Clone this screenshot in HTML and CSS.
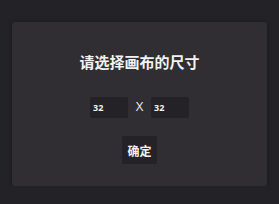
FILE: index.html
```html
<!DOCTYPE html>
<html lang="zh">
<head>
  <meta charset="UTF-8">
  <title>canvas size</title>
  <link rel="stylesheet" href="styles.css">
</head>
<body>
  <div class="dialog">
    <h2 class="title">请选择画布的尺寸</h2>
    <div class="size-row">
      <input class="size-input" type="text" value="32">
      <span class="times">X</span>
      <input class="size-input" type="text" value="32">
    </div>
    <button class="ok-btn">确定</button>
  </div>
</body>
</html>
```

FILE: styles.css
```css
html, body {
  margin: 0;
  padding: 0;
  background: #232226;
}

body {
  padding: 22px 12px 0;
  font-family: "Noto Sans CJK SC", "Noto Sans", sans-serif;
  color: #f2f2f2;
}

.dialog {
  height: 164px;
  box-sizing: border-box;
  background: #302d33;
  border-radius: 3px;
  box-shadow: 0 0 4px rgba(0, 0, 0, 0.35);
  display: flex;
  flex-direction: column;
  align-items: center;
  padding-top: 29px;
}

.title {
  margin: 0;
  font-size: 15px;
  line-height: 22px;
  font-weight: bold;
}

.size-row {
  display: flex;
  align-items: center;
  margin-top: 24px;
}

.size-input {
  width: 38px;
  height: 21px;
  box-sizing: border-box;
  border: none;
  border-radius: 2px;
  background: #252227;
  color: #f2f2f2;
  font-family: "Noto Sans", sans-serif;
  font-weight: bold;
  font-size: 9px;
  padding: 0 3px;
  outline: none;
}

.times {
  width: 23px;
  text-align: center;
  font-family: "Noto Sans", sans-serif;
  font-size: 13px;
  color: #e6e6e6;
  margin-top: -4px;
}

.ok-btn {
  margin-top: 18px;
  width: 35px;
  height: 28px;
  border: none;
  border-radius: 2px;
  background: #252227;
  color: #f2f2f2;
  font-family: "Noto Sans CJK SC", sans-serif;
  font-weight: bold;
  font-size: 12px;
  padding: 0;
}
```
